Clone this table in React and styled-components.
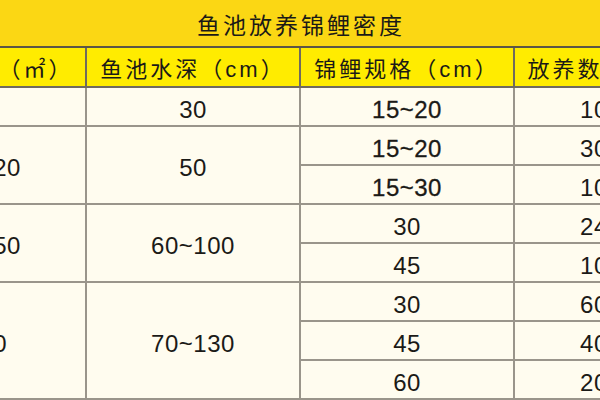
import React from "react";
import styled, { createGlobalStyle } from "styled-components";

const Global = createGlobalStyle`
  html, body { margin: 0; padding: 0; background: #fffcef; }
  body { font-family: "Liberation Sans", "Noto Sans CJK SC", sans-serif; }
`;

const Frame = styled.div`
  width: 600px;
  height: 400px;
  overflow: hidden;
  background: #fffcef;
`;

const Table = styled.table`
  table-layout: fixed;
  border-collapse: collapse;
  width: 830px;
  margin-left: -115px;
  color: #1b1a17;
`;

const Row = styled.tr`
  height: ${(p) => p.$h}px;
`;

const TitleCell = styled.td`
  padding: 6px 0 0;
  background: #fbd714;
  border-bottom: 2px solid #5c5546;
  text-align: center;
  font-size: 23px;
  line-height: 32px;
  letter-spacing: 3px;
`;

const HeadCell = styled.th`
  padding: 5px 0 0;
  background: #ffec00;
  border: 2px solid #6f6a5e;
  border-top: none;
  font-weight: normal;
  text-align: center;
  font-size: 22px;
  line-height: 28px;
  letter-spacing: 3px;
  white-space: nowrap;
  overflow: hidden;
`;

const Cell = styled.td`
  padding: 6px 0 0;
  background: #fffcef;
  border: 2px solid #9a958b;
  text-align: center;
  font-size: 24px;
  line-height: 26px;
  letter-spacing: 0.5px;
  white-space: nowrap;
  -webkit-text-stroke: ${(p) => (p.$bold ? "0.3px #1b1a17" : "0")};
`;

const groups = [
  { area: "<5", depth: "30", rows: [["15~20", "10~15", true]] },
  {
    area: "10~20",
    depth: "50",
    rows: [
      ["15~20", "30~40", true],
      ["15~30", "10~20", true],
    ],
  },
  {
    area: "20~50",
    depth: "60~100",
    rows: [
      ["30", "24~30"],
      ["45", "10~15"],
    ],
  },
  {
    area: ">50",
    depth: "70~130",
    rows: [
      ["30", "60~80"],
      ["45", "40~50"],
      ["60", "20~30"],
    ],
  },
];

export default function App() {
  return (
    <Frame>
      <Global />
      <Table>
        <colgroup>
          <col style={{ width: 200 }} />
          <col style={{ width: 214 }} />
          <col style={{ width: 214 }} />
          <col style={{ width: 202 }} />
        </colgroup>
        <tbody>
          <Row $h={47}>
            <TitleCell colSpan={4}>鱼池放养锦鲤密度</TitleCell>
          </Row>
          <Row $h={40}>
            <HeadCell>鱼池面积（㎡）</HeadCell>
            <HeadCell>鱼池水深（cm）</HeadCell>
            <HeadCell>锦鲤规格（cm）</HeadCell>
            <HeadCell>放养数量（尾）</HeadCell>
          </Row>
          {groups.map((g) =>
            g.rows.map((r, i) => (
              <Row $h={39} key={g.area + i}>
                {i === 0 && <Cell rowSpan={g.rows.length}>{g.area}</Cell>}
                {i === 0 && <Cell rowSpan={g.rows.length}>{g.depth}</Cell>}
                <Cell $bold={r[2]}>{r[0]}</Cell>
                <Cell>{r[1]}</Cell>
              </Row>
            ))
          )}
        </tbody>
      </Table>
    </Frame>
  );
}
